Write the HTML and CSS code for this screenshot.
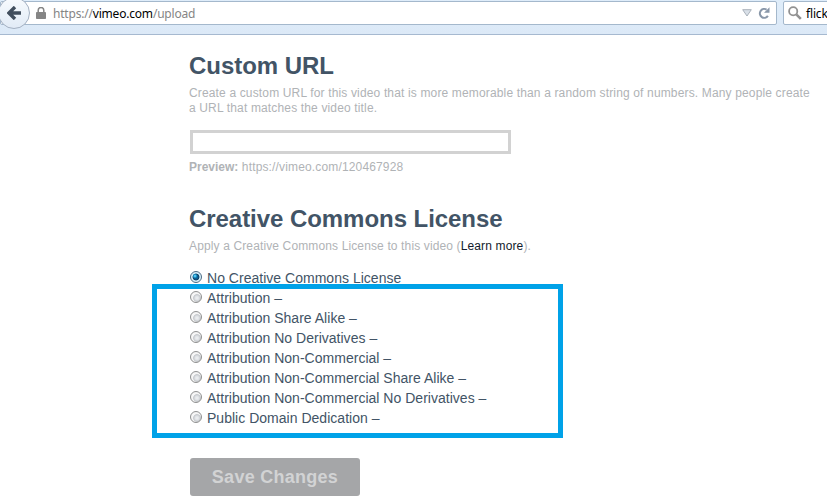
FILE: index.html
```html
<!DOCTYPE html>
<html lang="en">
<head>
<meta charset="utf-8">
<title>Upload settings</title>
<link rel="stylesheet" href="styles.css">
</head>
<body>
<header class="toolbar">
  <div class="address">
    <svg class="lock" width="10" height="12" viewBox="0 0 10 12"><path d="M2.2 6V3.3a2.8 2.8 0 0 1 5.6 0V6" fill="none" stroke="#858585" stroke-width="1.5"/><rect y="5" width="10" height="7" rx=".8" fill="#858585"/></svg>
    <span class="url">https://<b>vimeo.com</b>/upload</span>
    <svg class="drop" width="10" height="8" viewBox="0 0 10 8"><path d="M.7.7h8.6L5 7z" fill="#d9e0e8" stroke="#a9b1bb" stroke-width="1"/></svg>
    <svg class="reload" width="12" height="12" viewBox="0 0 12 12"><path d="M8.6 2.6A4.4 4.4 0 1 0 9.9 8.9" fill="none" stroke="#8997a9" stroke-width="2.1"/><path d="M11.5.3v5.5H6z" fill="#8997a9"/></svg>
  </div>
  <div class="search">
    <svg width="14" height="14" viewBox="0 0 14 14"><circle cx="5.2" cy="5.2" r="4.1" fill="none" stroke="#929292" stroke-width="1.8"/><path d="M8.3 8.3l4.5 4.5" stroke="#929292" stroke-width="2.6"/></svg>
    <span>flick</span>
  </div>
  <div class="back">
    <svg width="14" height="14" viewBox="0 0 14 14"><path d="M8 1L2 7l6 6M2.5 7H14" fill="none" stroke="#424f5e" stroke-width="3.4"/></svg>
  </div>
</header>
<main>
  <section class="custom">
    <h2 class="title">Custom URL</h2>
    <p class="note intro">Create a custom URL for this video that is more memorable than a random string of numbers. Many people create<br>a URL that matches the video title.</p>
    <input class="field" type="text" aria-label="Custom URL">
    <p class="note preview"><b>Preview:</b> <span>https://vimeo.com/120467928</span></p>
  </section>
  <section class="license">
    <h2 class="title">Creative Commons License</h2>
    <p class="note apply">Apply a Creative Commons License to this video (<a>Learn more</a>).</p>
    <div class="options">
      <label><i class="radio on"></i>No Creative Commons License</label>
      <label><i class="radio"></i>Attribution –</label>
      <label><i class="radio"></i>Attribution Share Alike –</label>
      <label><i class="radio"></i>Attribution No Derivatives –</label>
      <label><i class="radio"></i>Attribution Non-Commercial –</label>
      <label><i class="radio"></i>Attribution Non-Commercial Share Alike –</label>
      <label><i class="radio"></i>Attribution Non-Commercial No Derivatives –</label>
      <label><i class="radio"></i>Public Domain Dedication –</label>
      <div class="highlight"></div>
    </div>
  </section>
  <button class="save">Save Changes</button>
</main>
</body>
</html>
```
FILE: styles.css
```css
* { box-sizing: border-box; }
body { margin: 0; height: 503px; overflow: hidden; background: #fff; font-family: "Liberation Sans", Arial, sans-serif; color: #425466; }
.toolbar { position: relative; display: flex; gap: 6px; height: 35px; padding-top: 1px; overflow: hidden; background: linear-gradient(#dfedfa, #dce9f7); border-bottom: 1px solid #a6b9d0; }
.address, .search { display: flex; align-items: center; height: 24px; background: #fff; border: 1px solid #a4b8cc; border-radius: 2px; font: 12px "Noto Sans", sans-serif; }
.address { flex: none; width: 777px; padding: 0 6px 0 35px; }
.url { margin-left: 7px; color: #858585; letter-spacing: -.2px; }
.url b { font-weight: 400; color: #000; }
.drop { margin-left: auto; margin-right: 6px; }
.search { flex: none; width: 120px; padding-left: 4px; color: #000; }
.search span { margin-left: 4px; letter-spacing: -.15px; }
.back { position: absolute; left: -2px; top: -3px; display: flex; align-items: center; justify-content: center; width: 32px; height: 32px; border: 1px solid #a4b1c2; border-radius: 50%; background: linear-gradient(#f8fbfe, #e1ebf6); }
main { padding-left: 189px; }
.title { margin: 0; font-size: 24px; line-height: 28px; letter-spacing: -.05px; color: #425466; }
.custom { padding-top: 17px; }
.note { margin: 0; font-size: 12px; line-height: 15px; letter-spacing: .15px; color: #b0b3b6; white-space: nowrap; }
.intro { margin-top: 6px; }
.field { display: block; width: 321px; height: 24px; margin: 14px 0 0 1px; padding: 0 4px; border: 3px solid #d2d2d2; border-radius: 0; background: #fff; outline: 0; }
.preview { margin-top: 6px; }
.preview b { letter-spacing: 0; }
.license { margin-top: 30px; }
.apply { margin-top: 6px; letter-spacing: .13px; }
.apply a { color: #111a2b; }
.options { position: relative; margin-top: 14px; }
.options label { display: flex; align-items: center; height: 20px; font-size: 14px; letter-spacing: .02px; white-space: nowrap; }
.radio { width: 12px; height: 12px; margin: -2px 5px 0 1px; border: 1px solid #8e8f8f; border-radius: 50%; background: radial-gradient(circle at 6px 6px, #f0f1f3 0, #dfe2e5 2px, #c4c7cb 3.4px, #f6f6f6 4.3px); }
.radio.on { border-color: #4b6a83; background: radial-gradient(circle at 4px 4px, #a2eaff 0, #1aa7de 1.2px, transparent 2.5px), radial-gradient(circle at 5px 5px, #0d5f92 2px, #123e62 3px, #c9e9f7 3.8px, #e3f4fb 5px); }
.highlight { position: absolute; left: -37px; top: 16px; width: 411px; height: 154px; border: 5px solid #00a2e8; }
.save { display: block; width: 170px; height: 38px; margin: 30px 0 0 1px; padding: 0; border: 0; border-radius: 3px; background: #a5a6a8; color: #d2d3d4; font: bold 18px "Liberation Sans", Arial, sans-serif; letter-spacing: .27px; }
```
